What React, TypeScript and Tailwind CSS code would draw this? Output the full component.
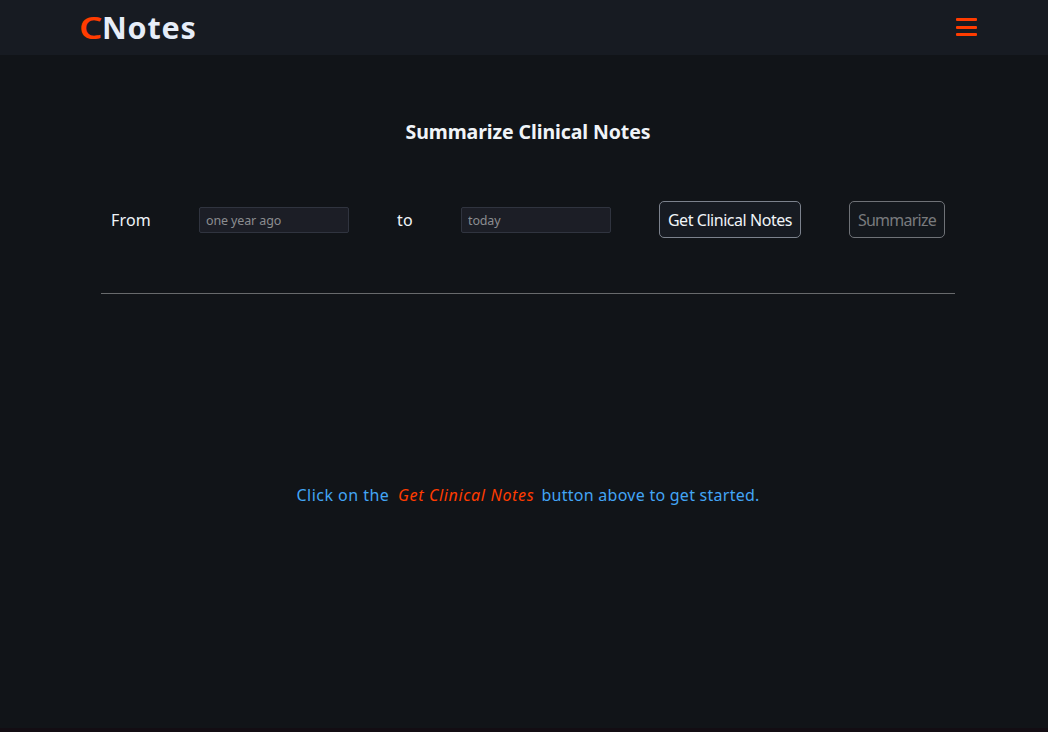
import React from "react";

function Header() {
  return (
    <header className="flex h-[55px] items-center justify-between bg-[#171b22] pr-[71px] pl-[79px]">
      <h1 className="mb-[2px] flex text-[30.5px] leading-[52px] font-bold whitespace-nowrap text-[#e6edf8]">
        <span className="w-[23px] origin-left scale-x-120 font-semibold text-[#ff3c00]">C</span>
        <span className="tracking-[0.8px]">Notes</span>
      </h1>
      <button aria-label="Menu" className="mb-px flex h-[18px] w-[21px] flex-col justify-between">
        <span className="h-[3px] w-full rounded-[1px] bg-[#ff3c00]" />
        <span className="h-[3px] w-full rounded-[1px] bg-[#ff3c00]" />
        <span className="h-[3px] w-full rounded-[1px] bg-[#ff3c00]" />
      </button>
    </header>
  );
}

function DateField({ label }: { label: string }) {
  return (
    <input
      type="text"
      placeholder={label}
      className="h-[26px] w-[150px] rounded-[2px] border border-[#30343f] bg-[#1c1e26] px-1.5 pt-0.5 font-['Noto_Sans',sans-serif] text-[12.5px] tracking-[-0.13px] text-white placeholder:text-[#8b8d90]"
    />
  );
}

export default function App() {
  return (
    <div className="flex h-[732px] w-[1048px] flex-col overflow-hidden border-b-4 border-[#130d13] bg-[#111418] font-['Noto_Sans',sans-serif] text-[#f0f4f8]">
      <Header />
      <main className="ml-[101px] flex w-[854px] flex-1 flex-col">
        <h2 className="mt-[63px] text-center text-[19.5px] leading-7 font-bold tracking-[-0.1px]">
          Summarize Clinical Notes
        </h2>
        <div className="mt-[55px] flex h-[37px] items-center pl-[10px] text-base">
          <span className="w-[88px] tracking-[0.15px]">From</span>
          <DateField label="one year ago" />
          <span className="ml-12 w-16 tracking-[0.3px]">to</span>
          <DateField label="today" />
          <button className="ml-12 h-[37px] w-[142px] rounded-[5px] border border-[#7c828d] bg-[#171b22] text-base tracking-[-0.45px] whitespace-nowrap">
            Get Clinical Notes
          </button>
          <button
            disabled
            className="ml-12 h-[37px] w-24 rounded-[5px] border border-[#6f7277] bg-[#14181d] text-base tracking-[-0.75px] text-[#797b7d]"
          >
            Summarize
          </button>
        </div>
        <hr className="mt-[55px] border-t border-[#686a6c]" />
        <p className="mt-[189px] flex pl-[195.5px] text-base leading-6 whitespace-nowrap text-[#43a5f5]">
          <span className="w-[101.5px] tracking-[0.47px]">Click on the</span>
          <em className="w-[143.5px] tracking-[0.65px] text-[#ff3c00]">Get Clinical Notes</em>
          <span className="tracking-[0.26px]">button above to get started.</span>
        </p>
      </main>
    </div>
  );
}
